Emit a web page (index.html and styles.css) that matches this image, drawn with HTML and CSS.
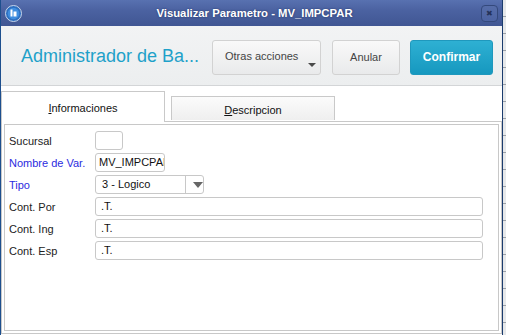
FILE: index.html
```html
<!DOCTYPE html>
<html lang="es">
<head>
  <meta charset="UTF-8" />
  <title>Visualizar Parametro - MV_IMPCPAR</title>
  <link rel="stylesheet" href="styles.css">
</head>
<body>
  <div class="window">
    <div class="titlebar">
      <span class="app-icon">
        <svg width="17" height="17" viewBox="0 0 17 17">
          <circle cx="8.5" cy="8.5" r="8" fill="#2d6fc0" stroke="#c9d6ea" stroke-width="1"/>
          <circle cx="8.5" cy="8.5" r="5.8" fill="#3f8ee0"/>
          <rect x="5.5" y="4.5" width="2" height="7" fill="#fff"/>
          <rect x="8.5" y="6.5" width="3" height="5" fill="#fff"/>
        </svg>
      </span>
      <span class="title">Visualizar Parametro - MV_IMPCPAR</span>
      <span class="close">&#x2716;</span>
    </div>

    <div class="header">
      <div class="app-name">Administrador de Ba...</div>
      <div class="actions">
        <button class="btn btn-menu">Otras acciones<span class="caret"></span></button>
        <button class="btn btn-cancel">Anular</button>
        <button class="btn btn-primary">Confirmar</button>
      </div>
    </div>

    <div class="tabs">
      <div class="tab active"><u>I</u>nformaciones</div>
      <div class="tab"><u>D</u>escripcion</div>
    </div>

    <div class="panel">
      <div class="panel-inner">
        <div class="row">
          <label>Sucursal</label>
          <div class="field w-small"></div>
        </div>
        <div class="row">
          <label class="req">Nombre de Var.</label>
          <div class="field w-mid">MV_IMPCPAR</div>
        </div>
        <div class="row">
          <label class="req">Tipo</label>
          <div class="field select">
            <span class="value">3 - Logico</span>
            <span class="arrow"></span>
          </div>
        </div>
        <div class="row">
          <label>Cont. Por</label>
          <div class="field wide">.T.</div>
        </div>
        <div class="row">
          <label>Cont. Ing</label>
          <div class="field wide">.T.</div>
        </div>
        <div class="row">
          <label>Cont. Esp</label>
          <div class="field wide">.T.</div>
        </div>
      </div>
    </div>
  </div>
</body>
</html>
```

FILE: styles.css
```css
body {
  margin: 0;
  font-family: 'Liberation Sans', Arial, sans-serif;
  background: #e6e8ea repeating-linear-gradient(180deg, #e6e8ea 0 16px, #9aa0a8 16px 17px);
  width: 506px;
  height: 335px;
  overflow: hidden;
}

.window {
  width: 501px;
  height: 335px;
  border-left: 1px solid #1d4f8e;
  border-right: 1px solid #1b3c6e;
  background: #fff;
  display: flex;
  flex-direction: column;
}

.titlebar {
  height: 26px;
  flex: none;
  display: flex;
  align-items: center;
  background: linear-gradient(#5871b0, #4b62a1 40%, #405693);
  color: #fff;
}

.app-icon {
  width: 17px;
  height: 17px;
  margin-left: 4px;
  display: flex;
}

.title {
  flex: 1;
  text-align: center;
  font-size: 11.3px;
  font-weight: bold;
  text-shadow: 0 0 2px #223466;
  padding-left: 6px;
}

.close {
  box-sizing: border-box;
  width: 17px;
  height: 17px;
  margin-right: 4px;
  border: 1px solid #34497c;
  border-radius: 4px;
  background: linear-gradient(#566da9, #4c63a2);
  color: #24325a;
  font-size: 8px;
  display: flex;
  align-items: center;
  justify-content: center;
}

.header {
  height: 59px;
  flex: none;
  display: flex;
  align-items: center;
  justify-content: space-between;
  background: linear-gradient(#f2f3f4, #eceeef);
  border-bottom: 1px solid #d3d5d7;
}

.app-name {
  padding-left: 20px;
  font-size: 18px;
  color: #1ea1c9;
  margin-top: 2px;
}

.actions {
  display: flex;
  gap: 10px;
  padding-right: 9px;
  margin-top: 3px;
}

.btn {
  box-sizing: border-box;
  height: 35px;
  padding: 0;
  border: 1px solid #d2d2d2;
  border-radius: 3px;
  background: linear-gradient(#f9f9f9, #e9eaeb);
  font-family: inherit;
  font-size: 11px;
  color: #444;
}

.btn-menu {
  width: 109px;
  position: relative;
  text-align: left;
  padding: 0 0 2px 12px;
}

.caret {
  position: absolute;
  right: 4px;
  bottom: 7px;
  border-left: 4px solid transparent;
  border-right: 4px solid transparent;
  border-top: 4px solid #4a4a4a;
}

.btn-cancel {
  width: 68px;
  margin-left: 1px;
}

.btn-primary {
  width: 83px;
  border-color: #1f98bd;
  background: linear-gradient(#2eb0d3, #1698bf);
  color: #fff;
  font-weight: bold;
  font-size: 12px;
}

.tabs {
  height: 35px;
  flex: none;
  display: flex;
  align-items: flex-end;
  gap: 6px;
  position: relative;
  z-index: 1;
}

.tab {
  width: 162px;
  height: 23px;
  border: 1px solid #c9c9c9;
  border-bottom: none;
  background: linear-gradient(#fbfbfb, #efefef);
  font-size: 11px;
  color: #111;
  text-align: center;
  line-height: 26px;
  margin-bottom: 1px;
}

.tab.active {
  height: 30px;
  background: #fff;
  line-height: 32px;
  margin-bottom: -1px;
}

.panel {
  flex: 1;
  border: 1px solid #c8c8c8;
  padding: 2px;
  margin-bottom: 1px;
  background: #fff;
}

.panel-inner {
  height: 100%;
  box-sizing: border-box;
  border: 1px solid #c8c8c8;
  padding: 6px 0 0 4px;
  display: flex;
  flex-direction: column;
  gap: 3px;
}

.row {
  display: flex;
  align-items: center;
  height: 19px;
}

label {
  width: 86px;
  font-size: 11px;
  color: #222;
}

label.req {
  color: #2b2be0;
}

.field {
  box-sizing: border-box;
  height: 19px;
  border: 1px solid #c8c8c8;
  border-radius: 3px;
  font-size: 11px;
  color: #111;
  padding-left: 5px;
  line-height: 17px;
  white-space: nowrap;
  overflow: hidden;
}

.w-small {
  width: 28px;
}

.w-mid {
  width: 70px;
  padding-left: 3px;
}

.wide {
  width: 388px;
}

.select {
  width: 109px;
  display: flex;
  padding-left: 0;
}

.select .value {
  width: 87px;
  padding-left: 6px;
  border-right: 1px solid #c8c8c8;
}

.select .arrow {
  margin: 6px 0 0 7px;
  width: 0;
  height: 0;
  border-left: 5px solid transparent;
  border-right: 5px solid transparent;
  border-top: 6px solid #666;
}
```
